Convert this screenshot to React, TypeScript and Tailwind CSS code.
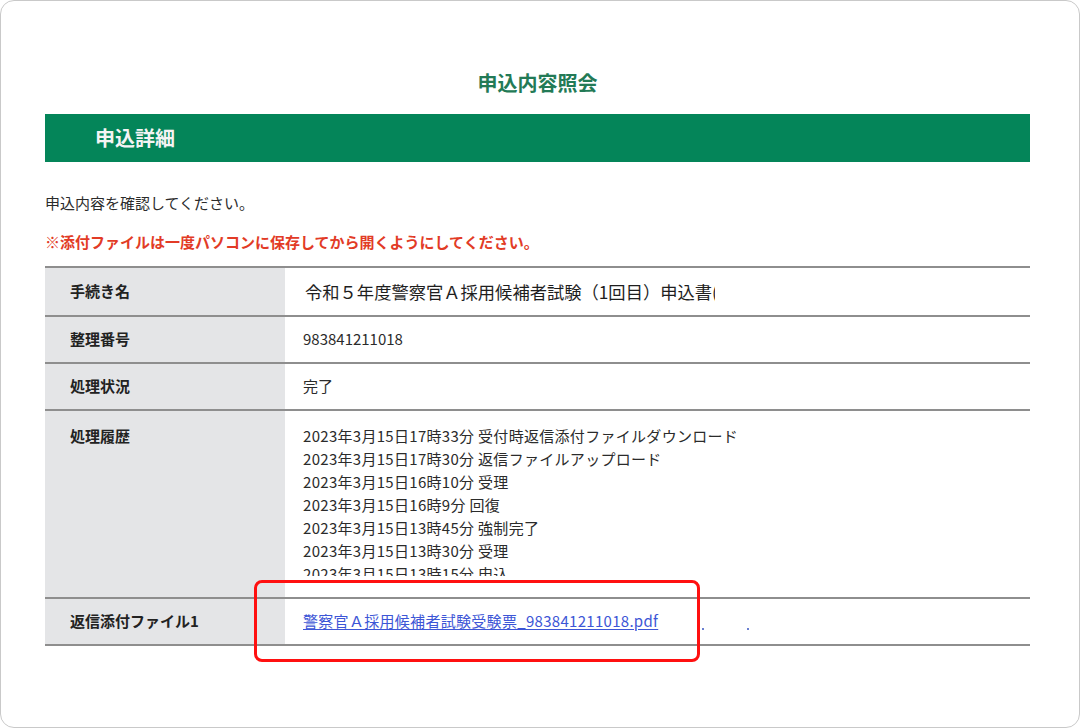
import React from "react";

const history = [
  "2023年3月15日17時33分 受付時返信添付ファイルダウンロード",
  "2023年3月15日17時30分 返信ファイルアップロード",
  "2023年3月15日16時10分 受理",
  "2023年3月15日16時9分 回復",
  "2023年3月15日13時45分 強制完了",
  "2023年3月15日13時30分 受理",
  "2023年3月15日13時15分 申込",
];

function Label({ children, top }: { children: React.ReactNode; top?: boolean }) {
  return (
    <div
      className={`w-[240px] shrink-0 bg-[#e4e5e7] pl-[25px] flex ${top ? "items-start pt-[14px]" : "items-center"} text-[15px] font-bold text-[#222]`}
    >
      {children}
    </div>
  );
}

export default function App() {
  return (
    <div className="w-[1080px] h-[728px] bg-white font-['Noto_Sans_CJK_JP','Noto_Sans',sans-serif]">
      <div className="relative w-[1080px] h-[728px] rounded-[14px] border border-[#c9c9c9] bg-white pl-[44px] pr-[49px] pt-[68px]">
        <h1 className="text-center text-[20px] leading-[28px] font-bold text-[#237a56]">申込内容照会</h1>
        <div className="mt-[17px] h-[48px] bg-[#048559] flex items-center pl-[50px]">
          <span className="text-[20px] font-bold text-[#f4f4f4] leading-none">申込詳細</span>
        </div>
        <p className="mt-[31px] text-[15px] leading-[20px] text-[#2b2b2b]">申込内容を確認してください。</p>
        <p className="mt-[19px] text-[15px] leading-[20px] font-bold text-[#e23b26]">
          ※添付ファイルは一度パソコンに保存してから開くようにしてください。
        </p>
        <div className="mt-[14px] border-t-2 border-[#8e8e8e]">
          <div className="flex h-[49px] border-b-2 border-[#8e8e8e]">
            <Label>手続き名</Label>
            <div className="flex items-center pl-[20px]">
              <div className="w-[410px] overflow-hidden whitespace-nowrap text-[17.3px] text-[#1e1e1e]">
                令和５年度警察官Ａ採用候補者試験（1回目）申込書(受付)
              </div>
            </div>
          </div>
          <div className="flex h-[47px] border-b-2 border-[#8e8e8e]">
            <Label>整理番号</Label>
            <div className="flex items-center pl-[18px] text-[15px] text-[#2b2b2b]">983841211018</div>
          </div>
          <div className="flex h-[47px] border-b-2 border-[#8e8e8e]">
            <Label>処理状況</Label>
            <div className="flex items-center pl-[18px] text-[15px] text-[#2b2b2b]">完了</div>
          </div>
          <div className="flex h-[188px] border-b-2 border-[#8e8e8e]">
            <Label top>処理履歴</Label>
            <div className="pl-[18px] pt-[13px]">
              <div className="h-[152px] overflow-hidden">
                {history.map((h) => (
                  <div key={h} className="text-[15px] leading-[23px] tracking-[0.3px] text-[#2b2b2b] whitespace-nowrap">
                    {h}
                  </div>
                ))}
              </div>
            </div>
          </div>
          <div className="flex h-[47px] border-b-2 border-[#8e8e8e]">
            <Label>返信添付ファイル1</Label>
            <div className="flex items-center pl-[18px] text-[15px]">
              <a href="#" className="text-[#3d56d6] tracking-[0.3px] underline underline-offset-2">
                警察官Ａ採用候補者試験受験票_983841211018.pdf
              </a>
              <span className="ml-[44px] mt-[14px] w-[2px] h-[2px] bg-[#6a7fd0]" />
              <span className="ml-[43px] mt-[14px] w-[2px] h-[2px] bg-[#6a7fd0]" />
            </div>
          </div>
        </div>
        <div className="absolute left-[253px] top-[579px] w-[446px] h-[82px] rounded-[8px] border-[3px] border-[#ff1010]" />
      </div>
    </div>
  );
}
